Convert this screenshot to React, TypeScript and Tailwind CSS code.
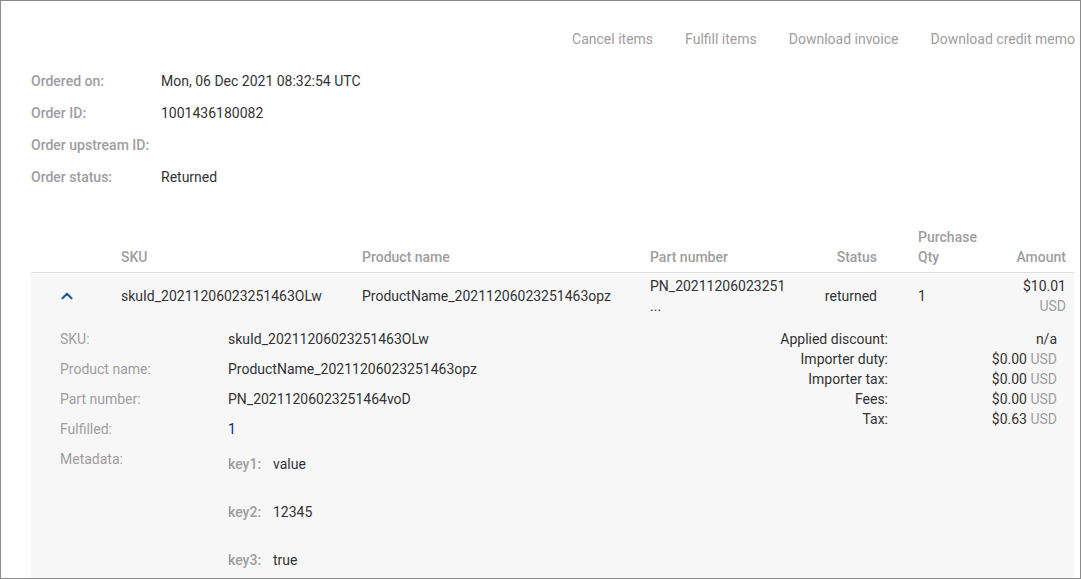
import { ChevronUp } from "lucide-react";

const info = [
  ["Ordered on:", "Mon, 06 Dec 2021 08:32:54 UTC"],
  ["Order ID:", "1001436180082"],
  ["Order upstream ID:", ""],
  ["Order status:", "Returned"],
];

const details = [
  ["SKU:", "skuId_20211206023251463OLw"],
  ["Product name:", "ProductName_20211206023251463opz"],
  ["Part number:", "PN_20211206023251464voD"],
  ["Fulfilled:", "1"],
];

const charges: [string, string, boolean][] = [
  ["Applied discount:", "n/a", false],
  ["Importer duty:", "$0.00", true],
  ["Importer tax:", "$0.00", true],
  ["Fees:", "$0.00", true],
  ["Tax:", "$0.63", true],
];

const meta = [
  ["key1:", "value"],
  ["key2:", "12345"],
  ["key3:", "true"],
];

export default function App() {
  return (
    <div className="h-[579px] w-[1081px] overflow-hidden border border-[#8c8c8c] bg-white font-['Roboto',sans-serif] text-[14px] leading-5 text-[#333]">
      <div className="flex justify-end gap-8 pr-[5px] pt-[28px] text-[#9e9e9e]">
        <span>Cancel items</span>
        <span>Fulfill items</span>
        <span>Download invoice</span>
        <span>Download credit memo</span>
      </div>

      <div className="mt-[16px] pl-[30px]">
        {info.map(([label, value]) => (
          <div key={label} className="flex h-8 items-center">
            <span className="w-[130px] font-medium text-[#9e9e9e]">{label}</span>
            <span>{value}</span>
          </div>
        ))}
      </div>

      <div className="mx-[30px] mt-[34px] mr-[6px]">
        <div className="grid grid-cols-[90px_241px_288px_140px_108px_102px_1fr] items-end border-b border-[#e0e0e0] pb-[5px] font-medium text-[#9e9e9e]">
          <span />
          <span>SKU</span>
          <span>Product name</span>
          <span>Part number</span>
          <span className="pr-[21px] text-right">Status</span>
          <span className="pl-[20px]">
            Purchase
            <br />
            Qty
          </span>
          <span className="pr-[8px] text-right">Amount</span>
        </div>

        <div className="bg-[#f7f7f7] pb-10">
          <div className="grid grid-cols-[90px_241px_288px_140px_108px_102px_1fr] items-center pb-[4px] pt-[3px]">
            <span className="flex pl-[27px]">
              <ChevronUp className="h-[18px] w-[18px] text-[#1f5fa8]" strokeWidth={3} />
            </span>
            <span>skuId_20211206023251463OLw</span>
            <span>ProductName_20211206023251463opz</span>
            <span>
              PN_20211206023251
              <br />
              ...
            </span>
            <span className="pr-[21px] text-right">returned</span>
            <span className="pl-[20px]">1</span>
            <span className="pr-[8px] text-right">
              $10.01
              <br />
              <span className="text-[#9e9e9e]">USD</span>
            </span>
          </div>

          <div className="mt-[9px] flex">
            <div className="flex-1 pl-[29px]">
              {details.map(([label, value]) => (
                <div key={label} className="flex h-[30px]">
                  <span className="w-[168px] text-[#9e9e9e]">{label}</span>
                  <span className={label === "Fulfilled:" ? "text-[#1a237e]" : ""}>{value}</span>
                </div>
              ))}
              <div className="flex">
                <span className="w-[168px] text-[#9e9e9e]">Metadata:</span>
                <div className="flex flex-col gap-7 pt-[5px]">
                  {meta.map(([k, v]) => (
                    <div key={k} className="flex">
                      <span className="w-[45px] font-medium text-[#9e9e9e]">{k}</span>
                      <span>{v}</span>
                    </div>
                  ))}
                </div>
              </div>
            </div>

            <div className="grid w-[374px] grid-cols-[188px_169px] content-start pr-[17px]">
              {charges.map(([label, value, usd]) => (
                <div key={label} className="contents">
                  <span className="text-right">{label}</span>
                  <span className="text-right">
                    {value}
                    {usd && <span className="text-[#9e9e9e]"> USD</span>}
                  </span>
                </div>
              ))}
            </div>
          </div>
        </div>
      </div>
    </div>
  );
}
